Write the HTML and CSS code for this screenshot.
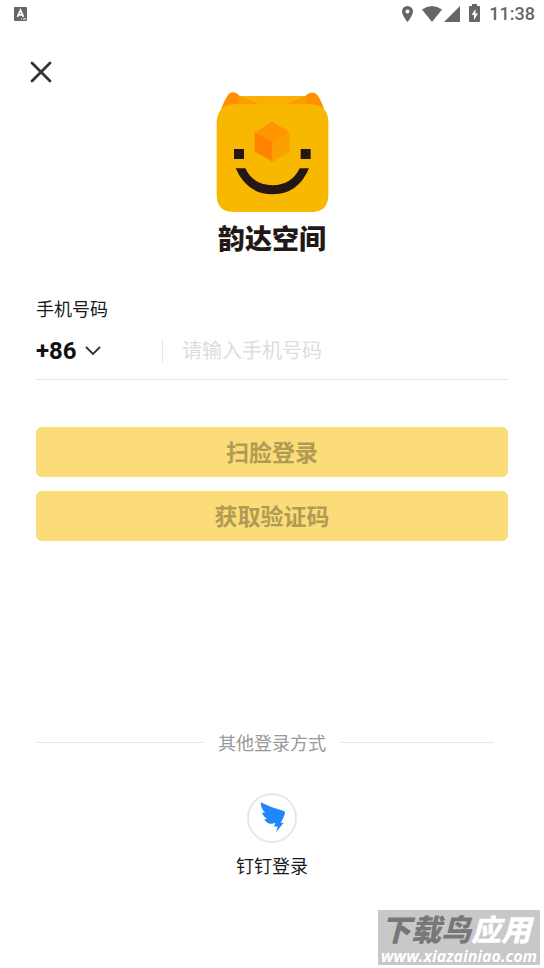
FILE: index.html
```html
<!DOCTYPE html>
<html lang="zh-CN">
<head>
<meta charset="utf-8">
<meta name="viewport" content="width=device-width, initial-scale=1">
<title>韵达空间</title>
<link rel="stylesheet" href="styles.css">
</head>
<body>
<div class="screen">
  <header class="status">
    <svg class="status-app" viewBox="0 0 13 14" aria-hidden="true">
      <rect width="13" height="14" rx="1" fill="#666"/>
      <path d="M3.500 9.800 6.500 3l3 6.800M4.600 7.800h3.800" fill="none" stroke="#fff" stroke-width="1.700"/>
      <path d="M7 12h1M9 12h3" stroke="#fff"/>
    </svg>
    <div class="status-right">
      <svg class="status-icons" viewBox="0 0 80 18" fill="#666" aria-hidden="true">
        <path fill-rule="evenodd" d="M6.500 1A5.500 5.500 0 0 0 1 6.500C1 10.500 6.500 17 6.500 17S12 10.500 12 6.500A5.500 5.500 0 0 0 6.500 1Zm0 3.500a2 2 0 1 1 0 4 2 2 0 0 1 0-4Z"/>
        <path d="M21 4.500Q31-2.500 41 4.500L31 17Z"/>
        <path d="M59 1V17H43Z"/>
        <path fill-rule="evenodd" d="M71 1V-1h5v2h2q1 0 1 1v14q0 1-1 1h-9q-1 0-1-1V2q0-1 1-1Zm3.500 3-4 6h2.500v5l4-6.500h-2.500Z"/>
      </svg>
      <time class="clock">11:38</time>
    </div>
  </header>

  <button class="close" type="button" aria-label="关闭">
    <svg viewBox="0 0 22 22" fill="none" stroke="#333" stroke-width="2.800" stroke-linecap="round" aria-hidden="true"><path d="M2 2l18 18M20 2 2 20"/></svg>
  </button>

  <main class="content">
    <div class="brand">
      <svg class="brand-logo" viewBox="34 20 336 360" aria-hidden="true">
        <path d="M46 82Q58 45 72 26Q76 20 88 21Q98 22 106 33H300Q310 22 320 22Q332 21 338 29Q352 48 361 82Z" fill="#ff9100"/>
        <path d="M106 33H302L243 58H165Z" fill="#f9b000"/>
        <path d="M106 33 165 58H100ZM302 33 243 58H310Z" fill="#fb9d00"/>
        <path d="M84 57H324Q371 62 371 112V332Q369 378 324 380H84Q38 378 36 332V112Q38 62 84 57Z" fill="#f9b800"/>
        <path d="M203 108 256 142 204 169 150 142Z" fill="#ff9500"/>
        <path d="M150 142 204 169V229L150 199Z" fill="#ff8300"/>
        <path d="M256 142 204 169V229L256 199Z" fill="#fca000"/>
        <path d="M88 191h30v30H88ZM288 191h30v30h-30Z" fill="#231815"/>
        <path d="M93 249H122Q145 299 204 300Q261 299 285 249H313Q280 327 204 327Q127 327 93 249Z" fill="#231815"/>
      </svg>
      <h1 class="brand-name">韵达空间</h1>
    </div>

    <form class="login">
      <label class="field-label" for="phone">手机号码</label>
      <div class="phone-row">
        <div class="country">
          <select class="country-code" aria-label="国家代码"><option>+86</option></select>
          <svg class="chevron" viewBox="0 0 16 10" fill="none" stroke="#333" stroke-width="1.800" aria-hidden="true"><path d="M1 1l7 7 7-7"/></svg>
        </div>
        <input class="phone" id="phone" type="tel" placeholder="请输入手机号码">
      </div>
      <div class="actions">
        <button class="action" type="button">扫脸登录</button>
        <button class="action" type="button">获取验证码</button>
      </div>
    </form>

    <section class="other">
      <h2 class="other-title"><span>其他登录方式</span></h2>
      <button class="provider" type="button">
        <span class="provider-icon">
          <svg viewBox="0 0 75 95" fill="#1f86fb" aria-hidden="true"><path d="M2 0Q31 15 67 25Q78 27 74 37Q70 49 62 62H71L48 90L53 73H42L46 62Q31 68 20 60Q15 56 13 51L22 50Q10 44 6 31L16 32Q3 21 2 0Z"/></svg>
        </span>
        <span>钉钉登录</span>
      </button>
    </section>
  </main>

  <aside class="watermark">
    <div class="mark-name">下载鸟<span class="mark-light">应用</span></div>
    <div class="mark-url">www.xiazainiao.com</div>
  </aside>
</div>
</body>
</html>
```
FILE: styles.css
```css
* {
  box-sizing: border-box;
}

body {
  margin: 0;
  background: #fff;
  color: #1a1a1a;
  font-family: Roboto, "Noto Sans CJK SC", sans-serif;
  font-size: 18px;
  line-height: 26px;
}

button,
input,
select {
  margin: 0;
  padding: 0;
  border: 0;
  background: none;
  color: inherit;
  font: inherit;
}

button {
  cursor: pointer;
}

svg {
  display: block;
  overflow: visible;
}

.screen {
  position: relative;
  display: flex;
  flex-direction: column;
  min-height: 100vh;
}

.status {
  display: flex;
  align-items: center;
  justify-content: space-between;
  height: 28px;
  padding: 0 9px 0 14px;
  color: #666;
}

.status-app {
  width: 13px;
  height: 14px;
}

.status-right {
  display: flex;
  align-items: center;
  gap: 8px;
}

.status-icons {
  width: 80px;
  height: 18px;
}

.clock {
  font-size: 18px;
  font-weight: 500;
}

.close {
  width: 44px;
  height: 44px;
  margin: 22px 0 0 19px;
  padding: 11px;
}

.close svg {
  width: 22px;
  height: 22px;
}

.content {
  padding: 0 36px;
}

.brand {
  display: flex;
  flex-direction: column;
  align-items: center;
  margin-top: -2px;
}

.brand-logo {
  width: 112px;
  height: 120px;
}

.brand-name {
  margin: 12px 0 0;
  color: #231815;
  font-size: 27px;
  font-weight: 900;
  line-height: 32px;
}

.login {
  margin-top: 41px;
}

.field-label {
  display: block;
}

.phone-row {
  display: flex;
  align-items: center;
  height: 57px;
  border-bottom: 1px solid #e5e5e5;
}

.country {
  display: flex;
  align-items: center;
  gap: 8px;
  width: 127px;
  height: 22px;
  border-right: 1px solid #e5e5e5;
}

.country-code {
  appearance: none;
  color: #111;
  font-size: 24px;
  font-weight: 700;
  line-height: 28px;
}

.chevron {
  width: 16px;
  height: 10px;
}

.phone {
  flex: 1;
  min-width: 0;
  padding-left: 19px;
  font-size: 20px;
  outline: none;
}

.phone::placeholder {
  color: #ddd;
}

.actions {
  display: grid;
  gap: 14px;
  margin-top: 47px;
}

.action {
  height: 50px;
  padding-top: 4px;
  border-radius: 6px;
  background: #fcdc78;
  color: #b19b54;
  font-size: 23px;
  font-weight: 700;
}

.other {
  margin-top: 186px;
  text-align: center;
}

.other-title {
  display: grid;
  grid-template-columns: 1fr auto 1fr;
  align-items: center;
  gap: 14px;
  margin: 0;
  color: #999;
  font-size: 18px;
  font-weight: 400;
}

.other-title span {
  padding-top: 4px;
}

.other-title::before,
.other-title::after {
  content: "";
  height: 1px;
  background: #e5e5e5;
}

.other-title::after {
  margin-right: 14px;
}

.provider {
  display: inline-flex;
  flex-direction: column;
  align-items: center;
  gap: 11px;
  margin-top: 36px;
}

.provider-icon {
  display: grid;
  place-items: center;
  width: 50px;
  height: 50px;
  border: 2px solid #e8e8e8;
  border-radius: 50%;
}

.provider-icon svg {
  width: 25px;
  height: 32px;
}

.watermark {
  position: absolute;
  right: 4px;
  bottom: 3px;
  width: 162px;
  height: 55px;
  padding: 3px 0 0 3px;
  background: #c8c8c8;
  color: #777;
  white-space: nowrap;
}

.mark-name {
  font-size: 30px;
  font-style: italic;
  font-weight: 900;
  line-height: 36px;
}

.mark-light,
.mark-url {
  color: #fff;
}

.mark-url {
  font-family: "Open Sans", sans-serif;
  font-size: 16px;
  font-style: italic;
  font-weight: 700;
  line-height: 14px;
}
```
